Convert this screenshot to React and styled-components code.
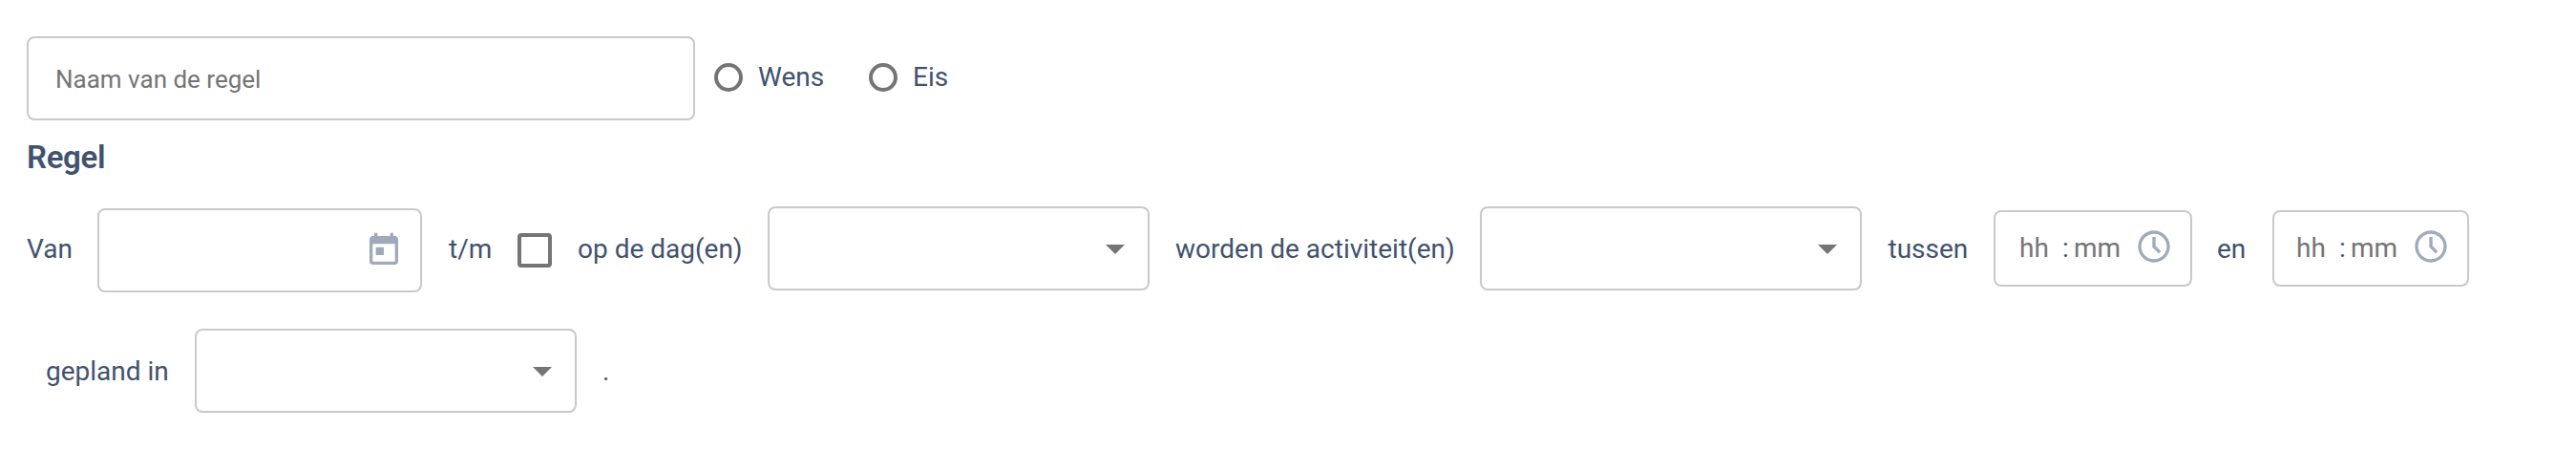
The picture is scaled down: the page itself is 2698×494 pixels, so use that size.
import React from "react";
import styled, { createGlobalStyle } from "styled-components";

const Global = createGlobalStyle`
  * { box-sizing: border-box; }
  body { margin: 0; background: #fff; }
`;

const Page = styled.main`
  display: flex;
  flex-direction: column;
  height: 494px;
  padding: 38px 28px 0;
  background: #fff;
  color: #42526e;
  font: 400 28px/36px Roboto, "Liberation Sans", sans-serif;
`;

const NameRow = styled.div`
  display: flex;
  height: 88px;
`;

const Outline = styled.div`
  display: flex;
  align-items: center;
  flex: none;
  border: 2px solid #c9c9c9;
  border-radius: 8px;
`;

const NameField = styled(Outline)`
  width: 700px;
  padding: 2px 0 0 28px;
  color: #757575;
  font-size: 26px;
`;

const RadioOption = styled.label`
  display: flex;
  align-items: center;
  width: 162px;
  height: 30px;
  margin-top: 28px;
`;

const RadioGroup = styled.div`
  display: flex;
  margin-left: 20px;
`;

const RadioRing = styled.span`
  width: 30px;
  height: 30px;
  margin-right: 16px;
  border: 4px solid #757575;
  border-radius: 50%;
`;

const Heading = styled.h2`
  margin: 19px 0 0;
  font-size: 33px;
  font-weight: 600;
  line-height: 40px;
  letter-spacing: -0.3px;
`;

const RuleRow = styled.div`
  display: flex;
  align-items: flex-start;
  margin-top: ${(p) => p.$top}px;
  padding-left: ${(p) => p.$indent || 0}px;
`;

const Word = styled.span`
  flex: none;
  width: ${(p) => p.$width}px;
  margin-top: 27px;
  padding-left: ${(p) => p.$inset || 0}px;
  white-space: nowrap;
`;

const DateField = styled(Outline)`
  width: 340px;
  height: 88px;
  margin: 2px 27px 0 0;
  padding-right: 18px;
  justify-content: flex-end;
`;

const IconSvg = styled.svg`
  display: block;
  flex: none;
  width: 40px;
  height: 40px;
  fill: #a0aaba;
`;

const Checkbox = styled.span`
  flex: none;
  width: 36px;
  height: 36px;
  margin: 28px 27px 0 0;
  border: 4px solid #757575;
  border-radius: 4px;
`;

const SelectBox = styled(Outline)`
  width: 400px;
  height: 88px;
  margin-right: 27px;
  padding: 2px 24px 0 0;
  justify-content: flex-end;

  &::after {
    content: "";
    border: 10px solid transparent;
    border-top-color: #757575;
    border-bottom: 0;
  }
`;

const TimeBox = styled(Outline)`
  width: ${(p) => p.$width}px;
  height: 80px;
  margin: 4px 26px 0 0;
  padding-left: ${(p) => p.$inset}px;
  color: #757575;
`;

const Hours = styled.span`
  width: 45px;
`;

const Colon = styled.span`
  width: 12px;
  color: #42526e;
`;

const Minutes = styled.span`
  width: 64px;
`;

const ClockIcon = styled(IconSvg)`
  margin-top: -4px;
`;

const Calendar = () => (
  <IconSvg viewBox="0 0 24 24">
    <path d="M19 3h-1V1h-2v2H8V1H6v2H5c-1.11 0-1.99.9-1.99 2L3 19c0 1.1.89 2 2 2h14c1.1 0 2-.9 2-2V5c0-1.1-.9-2-2-2zm0 16H5V8h14v11zM7 10h5v5H7z" />
  </IconSvg>
);

const TimeField = ({ width, inset }) => (
  <TimeBox $width={width} $inset={inset}>
    <Hours>hh</Hours>
    <Colon>:</Colon>
    <Minutes>mm</Minutes>
    <ClockIcon viewBox="0 0 24 24">
      <path d="M12 2C6.48 2 2 6.48 2 12s4.48 10 10 10 10-4.48 10-10S17.52 2 12 2zm0 18c-4.41 0-8-3.59-8-8s3.59-8 8-8 8 3.59 8 8-3.59 8-8 8zM13 6h-2v6.4l4 4 1.4-1.4-3.4-3.4z" />
    </ClockIcon>
  </TimeBox>
);

const Radio = ({ children }) => (
  <RadioOption>
    <RadioRing />
    {children}
  </RadioOption>
);

export default function App() {
  return (
    <>
      <Global />
      <Page>
        <NameRow>
          <NameField>Naam van de regel</NameField>
          <RadioGroup>
            <Radio>Wens</Radio>
            <Radio>Eis</Radio>
          </RadioGroup>
        </NameRow>
        <Heading>Regel</Heading>
        <RuleRow $top={31}>
          <Word $width={74}>Van</Word>
          <DateField>
            <Calendar />
          </DateField>
          <Word $width={73} $inset={1}>t/m</Word>
          <Checkbox />
          <Word $width={199}>op de dag(en)</Word>
          <SelectBox />
          <Word $width={319}>worden de activiteit(en)</Word>
          <SelectBox />
          <Word $width={111} $inset={0.5}>tussen</Word>
          <TimeField width={208} inset={25} />
          <Word $width={58}>en</Word>
          <TimeField width={206} inset={23} />
        </RuleRow>
        <RuleRow $top={38} $indent={20}>
          <Word $width={156}>gepland in</Word>
          <SelectBox />
          <Word>.</Word>
        </RuleRow>
      </Page>
    </>
  );
}
